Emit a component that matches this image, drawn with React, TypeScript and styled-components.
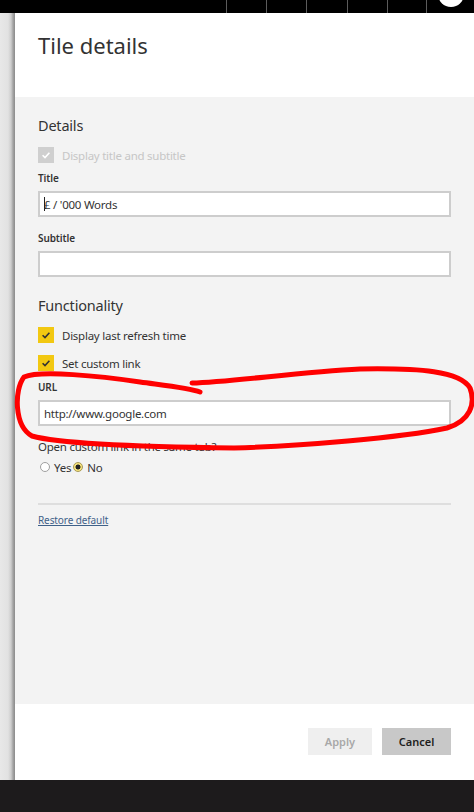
import React from 'react';
import styled, { createGlobalStyle } from 'styled-components';

const GlobalStyle = createGlobalStyle`
  html, body { margin: 0; padding: 0; }
  body {
    background: #1d1b1c;
    font-family: "Segoe UI", "Noto Sans", "Open Sans", sans-serif;
    color: #333;
  }
`;

const Screen = styled.div`
  position: relative;
  width: 474px;
  height: 812px;
  display: flex;
  flex-direction: column;
  overflow: hidden;
`;

// top app bar
const TopBar = styled.div`
  height: 13px;
  flex-shrink: 0;
  background: #000;
  display: flex;
  justify-content: flex-end;
`;

const TopCell = styled.div<{ $w: number }>`
  width: ${p => p.$w}px;
  border-left: 1px solid #5c5c5c;
  box-sizing: border-box;
  display: flex;
  justify-content: center;
  align-items: flex-end;
  overflow: hidden;
`;

const Avatar = styled.div`
  width: 26px;
  height: 26px;
  flex-shrink: 0;
  margin-bottom: 6px;
  border-radius: 50%;
  background: #fff;
`;

const Middle = styled.div`
  flex: 1;
  min-height: 0;
  display: flex;
`;

const SideShade = styled.div`
  width: 15px;
  flex-shrink: 0;
  background: linear-gradient(to right, #e8e8e8 0, #e2e2e2 8px, #cdcdcd 11px, #a4a4a4 13px, #8a8a8a 15px);
`;

const Panel = styled.div`
  flex: 1;
  display: flex;
  flex-direction: column;
  background: #fff;
`;

const Header = styled.div`
  height: 84px;
  flex-shrink: 0;
  padding: 17px 23px 0;
  box-sizing: border-box;
`;

const PanelTitle = styled.h1`
  margin: 0;
  font-size: 22px;
  line-height: 30px;
  font-weight: 400;
  color: #333;
`;

const Content = styled.div`
  flex: 1;
  background: #f3f3f3;
  padding: 0 23px;
  display: flex;
  flex-direction: column;
`;

const SectionTitle = styled.h2<{ $top: number }>`
  margin: ${p => p.$top}px 0 0;
  font-size: 14.5px;
  line-height: 20px;
  letter-spacing: -0.2px;
  font-weight: 400;
  color: #333;
`;

const CheckRow = styled.label<{ $top: number; $disabled?: boolean }>`
  margin-top: ${p => p.$top}px;
  height: 16px;
  display: flex;
  align-items: center;
  gap: 8px;
  font-size: 11.5px;
  letter-spacing: -0.25px;
  color: ${p => (p.$disabled ? '#c6c6c6' : '#333')};
`;

const Box = styled.span<{ $disabled?: boolean }>`
  width: 16px;
  height: 16px;
  flex-shrink: 0;
  display: flex;
  align-items: center;
  justify-content: center;
  background: ${p => (p.$disabled ? '#cfcfcf' : '#f2c811')};
`;

const FieldLabel = styled.div<{ $top: number }>`
  margin-top: ${p => p.$top}px;
  font-size: 10px;
  line-height: 14px;
  letter-spacing: -0.1px;
  font-weight: 600;
  color: #333;
`;

const TextBox = styled.div`
  margin-top: 6px;
  height: 26px;
  box-sizing: border-box;
  border: 2px solid #cdcdcd;
  background: #fff;
  padding: 0 4px;
  display: flex;
  align-items: center;
  font-size: 11.5px;
  letter-spacing: -0.25px;
  color: #333;
`;

const Caret = styled.span`
  display: inline-block;
  width: 1px;
  height: 14px;
  margin-right: -1px;
  background: #222;
`;

const Question = styled.div`
  margin-top: 13px;
  font-size: 11.5px;
  letter-spacing: -0.25px;
  line-height: 16px;
  color: #333;
`;

const RadioRow = styled.div`
  margin-top: 4px;
  height: 16px;
  display: flex;
  align-items: center;
  font-size: 11.5px;
  letter-spacing: -0.25px;
  color: #333;
`;

const Radio = styled.span<{ $on?: boolean }>`
  width: 10px;
  height: 10px;
  box-sizing: border-box;
  margin: 0 4px 0 2px;
  border-radius: 50%;
  border: 1px solid ${p => (p.$on ? '#a89a55' : '#a0a0a0')};
  background: ${p =>
    p.$on ? 'radial-gradient(circle, #222 0 2.2px, #f5e27c 2.8px)' : '#fff'};
`;

const Divider = styled.hr`
  margin: 28px 0 0;
  border: none;
  height: 2px;
  background: #dedede;
`;

const RestoreLink = styled.a`
  margin-top: 8px;
  align-self: flex-start;
  font-size: 10px;
  line-height: 14px;
  letter-spacing: -0.1px;
  color: #3f6189;
  text-decoration: underline;
  cursor: pointer;
`;

const Footer = styled.div`
  height: 76px;
  flex-shrink: 0;
  padding: 24px 23px 0;
  box-sizing: border-box;
  display: flex;
  justify-content: flex-end;
  align-items: flex-start;
  gap: 10px;
`;

const Button = styled.button<{ $primary?: boolean; $w: number }>`
  width: ${p => p.$w}px;
  height: 27px;
  border: none;
  padding: 0;
  font-family: inherit;
  font-size: 11px;
  font-weight: 600;
  background: ${p => (p.$primary ? '#c8c8c8' : '#efefef')};
  color: ${p => (p.$primary ? '#1e1e1e' : '#a8a8a8')};
`;

const BottomBar = styled.div`
  height: 32px;
  flex-shrink: 0;
  background: #1d1b1c;
`;

const Scribble = styled.svg`
  position: absolute;
  left: 0;
  top: 0;
  pointer-events: none;
`;

const Check = ({ color }: { color: string }) => (
  <svg width="16" height="16" viewBox="0 0 16 16">
    <path d="M4.6 8.2 L7 10.6 L11.4 5.8" fill="none" stroke={color} strokeWidth="1.6" />
  </svg>
);

export default function App() {
  const cells = [40, 40, 41, 40, 39];
  return (
    <Screen>
      <GlobalStyle />
      <TopBar>
        {cells.map((w, i) => (
          <TopCell key={i} $w={w} />
        ))}
        <TopCell $w={48}>
          <Avatar />
        </TopCell>
      </TopBar>
      <Middle>
        <SideShade />
        <Panel>
          <Header>
            <PanelTitle>Tile details</PanelTitle>
          </Header>
          <Content>
            <SectionTitle $top={18}>Details</SectionTitle>
            <CheckRow $top={12} $disabled>
              <Box $disabled>
                <Check color="#fff" />
              </Box>
              Display title and subtitle
            </CheckRow>
            <FieldLabel $top={8}>Title</FieldLabel>
            <TextBox>
              <Caret />£ / '000 Words
            </TextBox>
            <FieldLabel $top={14}>Subtitle</FieldLabel>
            <TextBox />
            <SectionTitle $top={18}>Functionality</SectionTitle>
            <CheckRow $top={12}>
              <Box>
                <Check color="#333" />
              </Box>
              Display last refresh time
            </CheckRow>
            <CheckRow $top={12}>
              <Box>
                <Check color="#333" />
              </Box>
              Set custom link
            </CheckRow>
            <FieldLabel $top={9}>URL</FieldLabel>
            <TextBox>http://www.google.com</TextBox>
            <Question>Open custom link in the same tab?</Question>
            <RadioRow>
              <Radio />
              Yes
              <Radio $on />
              No
            </RadioRow>
            <Divider />
            <RestoreLink>Restore default</RestoreLink>
          </Content>
          <Footer>
            <Button $w={64}>Apply</Button>
            <Button $w={69} $primary>
              Cancel
            </Button>
          </Footer>
        </Panel>
      </Middle>
      <BottomBar />
      <Scribble width="474" height="812" viewBox="0 0 474 812">
        <path
          d="M192 383 C230 382 300 372 360 369 C420 368 460 371 470 388 C476 404 470 421 447 428 C400 438 300 446 234 448 C150 447 60 444 32 436 C14 426 14 390 24 377 C40 370 100 376 140 382 C170 386 190 388 200 392"
          fill="none"
          stroke="#f00"
          strokeWidth="5"
          strokeLinecap="round"
          strokeLinejoin="round"
        />
      </Scribble>
    </Screen>
  );
}
